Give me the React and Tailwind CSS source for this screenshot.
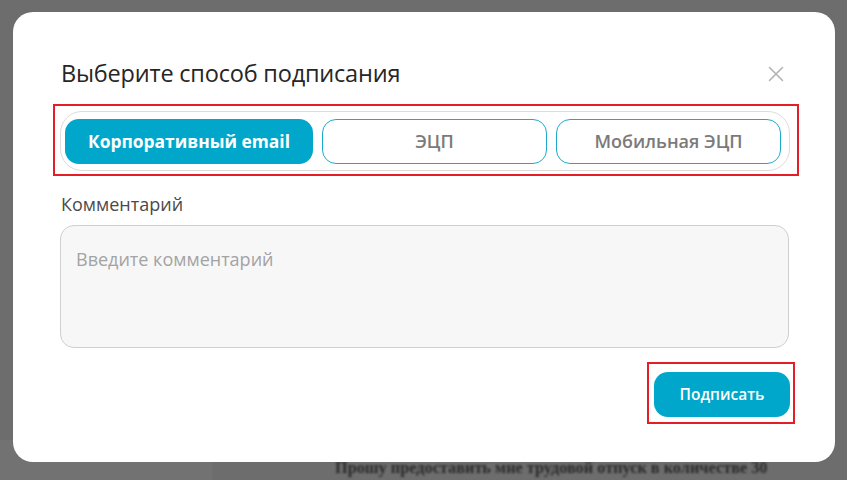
import React from "react";

export default function App() {
  return (
    <div className="relative w-[847px] h-[480px] overflow-hidden bg-[#6d6d6d]" style={{ fontFamily: '"Open Sans", "Noto Sans", sans-serif' }}>
      {/* background page content */}
      <div className="absolute left-0 top-[440px] w-[212px] h-[40px] bg-[#727272]" />
      <div className="absolute left-[335px] top-[456px] text-[16.3px] font-bold text-[#2a2a2a] blur-[1.2px] whitespace-nowrap" style={{ fontFamily: '"Liberation Serif", serif' }}>
        Прошу предоставить мне трудовой отпуск в количестве 30
      </div>

      {/* modal */}
      <div className="absolute left-[13px] top-[12px] w-[822px] h-[450px] bg-white rounded-[20px] flex flex-col pl-[40px] pr-[37px] pt-[45px]">
        <div className="flex items-center justify-between pl-[8px] pr-[14px]">
          <h2 className="text-[23.5px] leading-[32px] text-[#262626] font-normal tracking-[-0.2px]">Выберите способ подписания</h2>
          <svg width="16" height="16" viewBox="0 0 16 16" className="mt-[2px]">
            <path d="M1.5 1.5 L14.5 14.5 M14.5 1.5 L1.5 14.5" stroke="#b3b3b3" strokeWidth="1.6" strokeLinecap="round" />
          </svg>
        </div>

        <div className="mt-[15px] w-[746px] h-[72px] border-2 border-[#e41e26] pl-[5px] pt-[5px]">
          <div className="w-[730px] h-[60px] border border-[#dcdcdc] rounded-[22px] flex items-center pl-[4px] gap-[9px]">
            <div className="w-[248px] h-[45px] rounded-[14px] bg-[#00a7cb] flex items-center justify-center text-white text-[17.4px] font-bold">
              Корпоративный email
            </div>
            <div className="w-[225px] h-[45px] rounded-[14px] border border-[#1ea9cb] flex items-center justify-center text-[#7a7a7a] text-[18px] font-semibold">
              ЭЦП
            </div>
            <div className="w-[225px] h-[45px] rounded-[14px] border border-[#1ea9cb] flex items-center justify-center text-[#7a7a7a] text-[18px] font-semibold">
              Мобильная ЭЦП
            </div>
          </div>
        </div>

        <div className="mt-[16px] pl-[8px] text-[18px] leading-[24px] text-[#4a4a4a]">Комментарий</div>
        <div className="mt-[9px] ml-[7px] w-[729px] h-[123px] bg-[#f7f7f7] border border-[#cfcfcf] rounded-[14px] px-[15px] pt-[21px] text-[18px] leading-[24px] text-[#a3a3a3]">
          Введите комментарий
        </div>

        <div className="mt-[14px] flex justify-end pr-[3px]">
          <div className="border-2 border-[#e41e26] w-[148px] h-[62px] flex items-start justify-end pt-[8px] pr-[3px]">
            <div className="w-[136px] h-[45px] rounded-[14px] bg-[#00a7cb] flex items-center justify-center text-white text-[15.5px] font-semibold">
              Подписать
            </div>
          </div>
        </div>
      </div>
    </div>
  );
}
